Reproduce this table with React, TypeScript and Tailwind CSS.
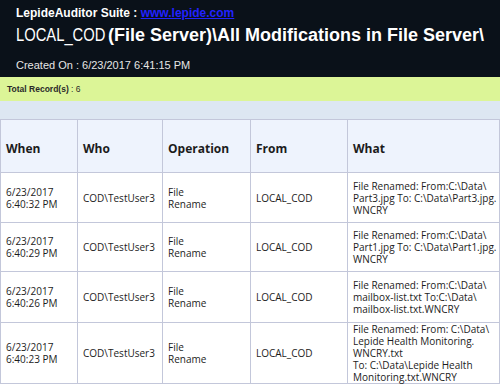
import React from "react";

const rows = [
  {
    when: ["6/23/2017", "6:40:32 PM"],
    what: ["File Renamed: From:C:\\Data\\", "Part3.jpg To: C:\\Data\\Part3.jpg.", "WNCRY"],
    h: "h-[50px]",
  },
  {
    when: ["6/23/2017", "6:40:29 PM"],
    what: ["File Renamed: From:C:\\Data\\", "Part1.jpg To: C:\\Data\\Part1.jpg.", "WNCRY"],
    h: "h-[49px]",
  },
  {
    when: ["6/23/2017", "6:40:26 PM"],
    what: ["File Renamed: From:C:\\Data\\", "mailbox-list.txt To:C:\\Data\\", "mailbox-list.txt.WNCRY"],
    h: "h-[51px]",
  },
  {
    when: ["6/23/2017", "6:40:23 PM"],
    what: [
      "File Renamed: From: C:\\Data\\",
      "Lepide Health Monitoring.",
      "WNCRY.txt",
      "To: C:\\Data\\Lepide Health",
      "Monitoring.txt.WNCRY",
    ],
    h: "h-[60px]",
  },
];

function Lines({ lines }: { lines: string[] }) {
  return (
    <>
      {lines.map((l, i) => (
        <div key={i} className="whitespace-nowrap">
          {l}
        </div>
      ))}
    </>
  );
}

export default function App() {
  const cell = "border border-[#c3c7da] px-[5px] align-middle";
  return (
    <div className="w-[500px] h-[390px] bg-white overflow-hidden">
      <div className="bg-[#0a1119] h-[77px] pl-[16px] pt-[6px] font-['Liberation_Sans',Arial,sans-serif]">
        <div className="text-[12px] font-bold text-white leading-[15px]">
          LepideAuditor Suite :{" "}
          <span className="text-[#2222ff] underline">www.lepide.com</span>
        </div>
        <div className="mt-[2px] leading-[24px] text-white whitespace-nowrap flex items-baseline">
          <span className="inline-block w-[92px] text-[18px]">
            <span className="inline-block origin-left scale-x-[0.82]">LOCAL_COD</span>
          </span>
          <span className="text-[18px] font-bold">
            (File Server)\All Modifications in File Server\
          </span>
        </div>
        <div className="mt-[12px] text-[11px] text-[#e6e6e6] leading-[13px]">
          Created On : 6/23/2017 6:41:15 PM
        </div>
      </div>
      <div className="bg-[#dcf597] h-[24px] pl-[7px] flex items-center text-[8.5px] text-[#2a2a2a] font-['Liberation_Sans',Arial,sans-serif]">
        <span className="font-bold">Total Record(s)</span>
        <span>&nbsp;: 6</span>
      </div>
      <div className="bg-[#dde7f2] h-[18px]" />
      <table className="w-[499px] table-fixed border-collapse font-['Open_Sans',sans-serif] text-[#1c1c1c]">
        <colgroup>
          <col className="w-[77px]" />
          <col className="w-[85px]" />
          <col className="w-[88px]" />
          <col className="w-[97px]" />
          <col className="w-[152px]" />
        </colgroup>
        <thead>
          <tr className="h-[53px] bg-[#eef3fd] text-[12px] font-bold text-left">
            <th className={cell + " pt-[6px]"}>When</th>
            <th className={cell + " pt-[6px]"}>Who</th>
            <th className={cell + " pt-[6px]"}>Operation</th>
            <th className={cell + " pt-[6px]"}>From</th>
            <th className={cell + " pt-[6px]"}>What</th>
          </tr>
        </thead>
        <tbody className="text-[10px] leading-[12px]">
          {rows.map((r, i) => (
            <tr key={i} className={r.h}>
              <td className={cell}>
                <Lines lines={r.when} />
              </td>
              <td className={cell + " whitespace-nowrap"}>COD\TestUser3</td>
              <td className={cell}>
                <Lines lines={["File", "Rename"]} />
              </td>
              <td className={cell + " whitespace-nowrap"}>LOCAL_COD</td>
              <td className={cell}>
                <Lines lines={r.what} />
              </td>
            </tr>
          ))}
        </tbody>
      </table>
    </div>
  );
}
